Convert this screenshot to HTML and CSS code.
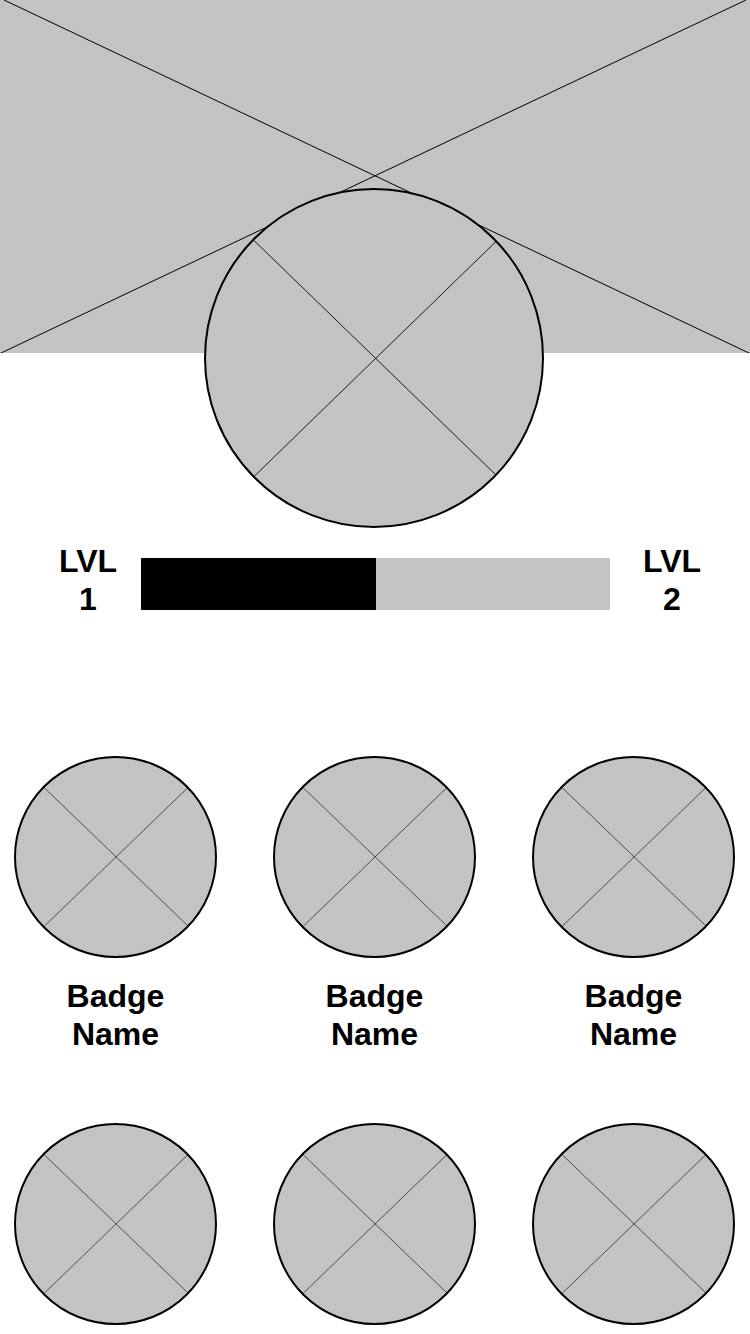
FILE: index.html
```html
<!DOCTYPE html>
<html lang="en">
<head>
<meta charset="utf-8">
<meta name="viewport" content="width=device-width, initial-scale=1">
<title>Profile</title>
<link rel="stylesheet" href="styles.css">
</head>
<body>
<svg width="0" height="0" class="symbols" aria-hidden="true">
  <symbol id="badge" viewBox="0 0 203 202">
    <ellipse class="disc" cx="101.5" cy="101" rx="100.5" ry="100"/>
    <path class="cross cross-fine" d="M30 31.500L174 170M174 31.500L30 170.500"/>
  </symbol>
</svg>
<header class="profile">
  <svg class="cover" viewBox="0 0 750 353" preserveAspectRatio="none" aria-hidden="true">
    <path class="cross" d="M4 0L750 353.500M746 0L0 353.500"/>
  </svg>
  <svg class="avatar" viewBox="0 0 342 340" aria-hidden="true">
    <circle class="disc" cx="170" cy="170" r="169"/>
    <path class="cross cross-thin" d="M50 52.500L292 287M292 53.500L50 288.500"/>
  </svg>
</header>
<main>
  <section class="level">
    <label class="level-label" for="level-progress">LVL<br>1</label>
    <progress class="level-bar" id="level-progress" value="50" max="100"></progress>
    <span class="level-label">LVL<br>2</span>
  </section>
  <section class="badges">
    <figure class="badge"><svg class="badge-icon" aria-hidden="true"><use href="#badge"/></svg><figcaption>Badge<br>Name</figcaption></figure>
    <figure class="badge"><svg class="badge-icon" aria-hidden="true"><use href="#badge"/></svg><figcaption>Badge<br>Name</figcaption></figure>
    <figure class="badge"><svg class="badge-icon" aria-hidden="true"><use href="#badge"/></svg><figcaption>Badge<br>Name</figcaption></figure>
    <figure class="badge"><svg class="badge-icon" aria-hidden="true"><use href="#badge"/></svg></figure>
    <figure class="badge"><svg class="badge-icon" aria-hidden="true"><use href="#badge"/></svg></figure>
    <figure class="badge"><svg class="badge-icon" aria-hidden="true"><use href="#badge"/></svg></figure>
  </section>
</main>
</body>
</html>
```
FILE: styles.css
```css
body {
  margin: 0;
  background: #fff;
  color: #000;
  font: bold 32px/38px "Liberation Sans", Arial, sans-serif;
  text-align: center;
}

.symbols {
  display: none;
}

.disc {
  fill: #c3c3c3;
  stroke: #000;
  stroke-width: 2px;
}

.cross {
  fill: none;
  stroke: #000;
  stroke-width: 1px;
}

.cross-thin {
  stroke-opacity: 0.85;
}

.cross-fine {
  stroke-opacity: 0.6;
}

.profile {
  display: flex;
  flex-direction: column;
  align-items: center;
}

.cover {
  display: block;
  width: 100%;
  aspect-ratio: 750 / 353;
  background: #c3c3c3;
}

.avatar {
  display: block;
  width: 342px;
  height: 340px;
  margin-top: -165px;
}

.level {
  display: grid;
  grid-template-columns: 106px 1fr 124px;
  align-items: start;
  padding: 14px 16px 0 35px;
}

.level-bar {
  appearance: none;
  display: block;
  width: 100%;
  height: 52px;
  margin-top: 16px;
  border: 0;
  background: #c3c3c3;
}

.level-bar::-webkit-progress-bar {
  background: #c3c3c3;
}

.level-bar::-webkit-progress-value {
  background: #000;
}

.level-bar::-moz-progress-bar {
  background: #000;
}

.badges {
  display: grid;
  grid-template-columns: repeat(3, 203px);
  justify-content: space-between;
  row-gap: 70px;
  padding: 138px 15px 9px 14px;
}

.badge {
  display: flex;
  flex-direction: column;
  gap: 19px;
  margin: 0;
}

.badge-icon {
  display: block;
  width: 203px;
  height: 202px;
}
```
